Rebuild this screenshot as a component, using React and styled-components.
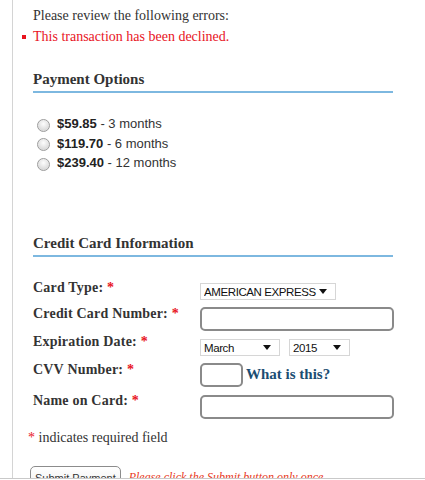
import React from "react";
import styled, { createGlobalStyle } from "styled-components";

const GlobalStyle = createGlobalStyle`
  body {
    margin: 0;
    background: #fff;
    font-family: "Liberation Serif", Georgia, serif;
    color: #333;
  }
`;

export default function App() {
  return (
    <>
      <GlobalStyle />
      <Page>
        <Content>
          <Notice>Please review the following errors:</Notice>
          <ErrorList>
            <ErrorItem>This transaction has been declined.</ErrorItem>
          </ErrorList>

          <Heading>Payment Options</Heading>
          <OptionList>
            <Option>
              <Radio type="radio" name="plan" />
              <b>$59.85</b>&nbsp;- 3 months
            </Option>
            <Option>
              <Radio type="radio" name="plan" />
              <b>$119.70</b>&nbsp;- 6 months
            </Option>
            <Option>
              <Radio type="radio" name="plan" />
              <b>$239.40</b>&nbsp;- 12 months
            </Option>
          </OptionList>

          <Heading $top={60}>Credit Card Information</Heading>
          <Form>
            <Row $h={26}>
              <Label>
                Card Type: <Star>*</Star>
              </Label>
              <SelectWrap $w={136} $mt={2}>
                <Select defaultValue="amex">
                  <option value="amex">AMERICAN EXPRESS</option>
                  <option value="visa">VISA</option>
                </Select>
              </SelectWrap>
            </Row>
            <Row $h={30}>
              <Label>
                Credit Card Number: <Star>*</Star>
              </Label>
              <TextInput $w={194} $mt={1} />
            </Row>
            <Row $h={26}>
              <Label $mt={-2}>
                Expiration Date: <Star>*</Star>
              </Label>
              <Controls>
                <SelectWrap $w={80} $mt={2}>
                  <Select defaultValue="3">
                    <option value="3">March</option>
                  </Select>
                </SelectWrap>
                <SelectWrap $w={61} $mt={2}>
                  <Select defaultValue="2015">
                    <option value="2015">2015</option>
                  </Select>
                </SelectWrap>
              </Controls>
            </Row>
            <Row $h={32}>
              <Label>
                CVV Number: <Star>*</Star>
              </Label>
              <Controls $gap={3}>
                <TextInput $w={43} $mt={1} />
                <HelpLink href="#">What is this?</HelpLink>
              </Controls>
            </Row>
            <Row $h={26}>
              <Label $mt={-1}>
                Name on Card: <Star>*</Star>
              </Label>
              <TextInput $w={194} $mt={1} />
            </Row>
          </Form>

          <Required>
            <Star>*</Star> indicates required field
          </Required>

          <SubmitRow>
            <SubmitButton type="button">Submit Payment</SubmitButton>
            <OnceNote>Please click the Submit button only once.</OnceNote>
          </SubmitRow>
        </Content>
      </Page>
    </>
  );
}

const Page = styled.div`
  height: 478px;
  overflow: hidden;
  border-bottom: 1px solid #c9c9c9;
  position: relative;
  &::before {
    content: "";
    position: absolute;
    left: 12px;
    top: 0;
    bottom: 0;
    width: 1px;
    background: #d4d4d4;
  }
`;

const Content = styled.div`
  width: 360px;
  margin-left: 33px;
  padding-top: 6px;
`;

const Notice = styled.div`
  font-size: 14px;
  line-height: 20px;
  color: #333;
`;

const ErrorList = styled.ul`
  margin: 1px 0 0;
  padding: 0;
  list-style: none;
`;

const ErrorItem = styled.li`
  position: relative;
  font-size: 14px;
  line-height: 20px;
  color: #e8141e;
  &::before {
    content: "";
    position: absolute;
    left: -11px;
    top: 8px;
    width: 4px;
    height: 4px;
    background: #e8141e;
  }
`;

const Heading = styled.h2`
  margin: ${(p) => p.$top || 22}px 0 0;
  padding-bottom: 2px;
  font-size: 15px;
  line-height: 20px;
  font-weight: bold;
  color: #333;
  border-bottom: 2px solid #7db8e0;
`;

const OptionList = styled.div`
  margin-top: 21px;
  padding-left: 4px;
`;

const Option = styled.label`
  display: flex;
  align-items: center;
  height: 19.5px;
  font-family: "Liberation Sans", Arial, sans-serif;
  font-size: 13px;
  color: #333;
  b {
    color: #222;
  }
`;

const Radio = styled.input`
  appearance: none;
  width: 13px;
  height: 13px;
  margin: 3px 7px 0 0;
  border-radius: 50%;
  border: 1px solid #9c9c9c;
  background: radial-gradient(circle at 50% 35%, #fdfdfd 0%, #e2e2e2 55%, #c8c8c8 100%);
  box-shadow: inset 0 0 1px #fff;
`;

const Form = styled.div`
  margin-top: 23px;
`;

const Row = styled.div`
  display: grid;
  grid-template-columns: 167px 1fr;
  align-items: start;
  height: ${(p) => p.$h}px;
`;

const Label = styled.div`
  margin-top: ${(p) => p.$mt || 0}px;
  font-size: 14px;
  line-height: 16px;
  font-weight: bold;
  letter-spacing: 0.2px;
  color: #333;
`;

const Star = styled.span`
  color: #e8141e;
  font-weight: bold;
`;

const Controls = styled.div`
  display: flex;
  align-items: center;
  gap: ${(p) => (p.$gap != null ? p.$gap : 9)}px;
`;

const SelectWrap = styled.div`
  position: relative;
  width: ${(p) => p.$w}px;
  height: 17px;
  margin-top: ${(p) => p.$mt || 0}px;
  &::after {
    content: "";
    position: absolute;
    right: 9px;
    top: 7px;
    border-left: 4px solid transparent;
    border-right: 4px solid transparent;
    border-top: 5px solid #111;
    pointer-events: none;
  }
`;

const Select = styled.select`
  appearance: none;
  width: 100%;
  height: 100%;
  box-sizing: border-box;
  margin: 0;
  padding: 0 0 0 3px;
  border: 1px solid #d6d6d6;
  border-radius: 0;
  background: #fff;
  font-family: "Liberation Sans", Arial, sans-serif;
  font-size: 11.5px;
  letter-spacing: -0.4px;
  color: #111;
  outline: none;
`;

const TextInput = styled.input`
  box-sizing: border-box;
  width: ${(p) => p.$w}px;
  height: 24px;
  margin: ${(p) => p.$mt || 0}px 0 0;
  padding: 0 6px;
  border: 2px solid #8a8a8a;
  border-radius: 5px;
  background: #fff;
  outline: none;
`;

const HelpLink = styled.a`
  font-size: 15px;
  font-weight: bold;
  color: #1b4d72;
  text-decoration: none;
  margin-top: 1px;
`;

const Required = styled.div`
  margin: 8px 0 0 -5px;
  font-size: 14px;
  line-height: 20px;
  color: #333;
  ${Star} {
    font-weight: normal;
  }
`;

const SubmitRow = styled.div`
  display: flex;
  align-items: center;
  gap: 8px;
  margin: 18px 0 0 -3px;
`;

const SubmitButton = styled.button`
  height: 24px;
  padding: 0 4px;
  border: 1px solid #8c8c8c;
  border-radius: 5px;
  background: linear-gradient(#ffffff, #eeeeee);
  font-family: "Liberation Sans", Arial, sans-serif;
  font-size: 11px;
  color: #333;
`;

const OnceNote = styled.span`
  font-size: 12px;
  font-style: italic;
  color: #e8391d;
  white-space: nowrap;
`;
